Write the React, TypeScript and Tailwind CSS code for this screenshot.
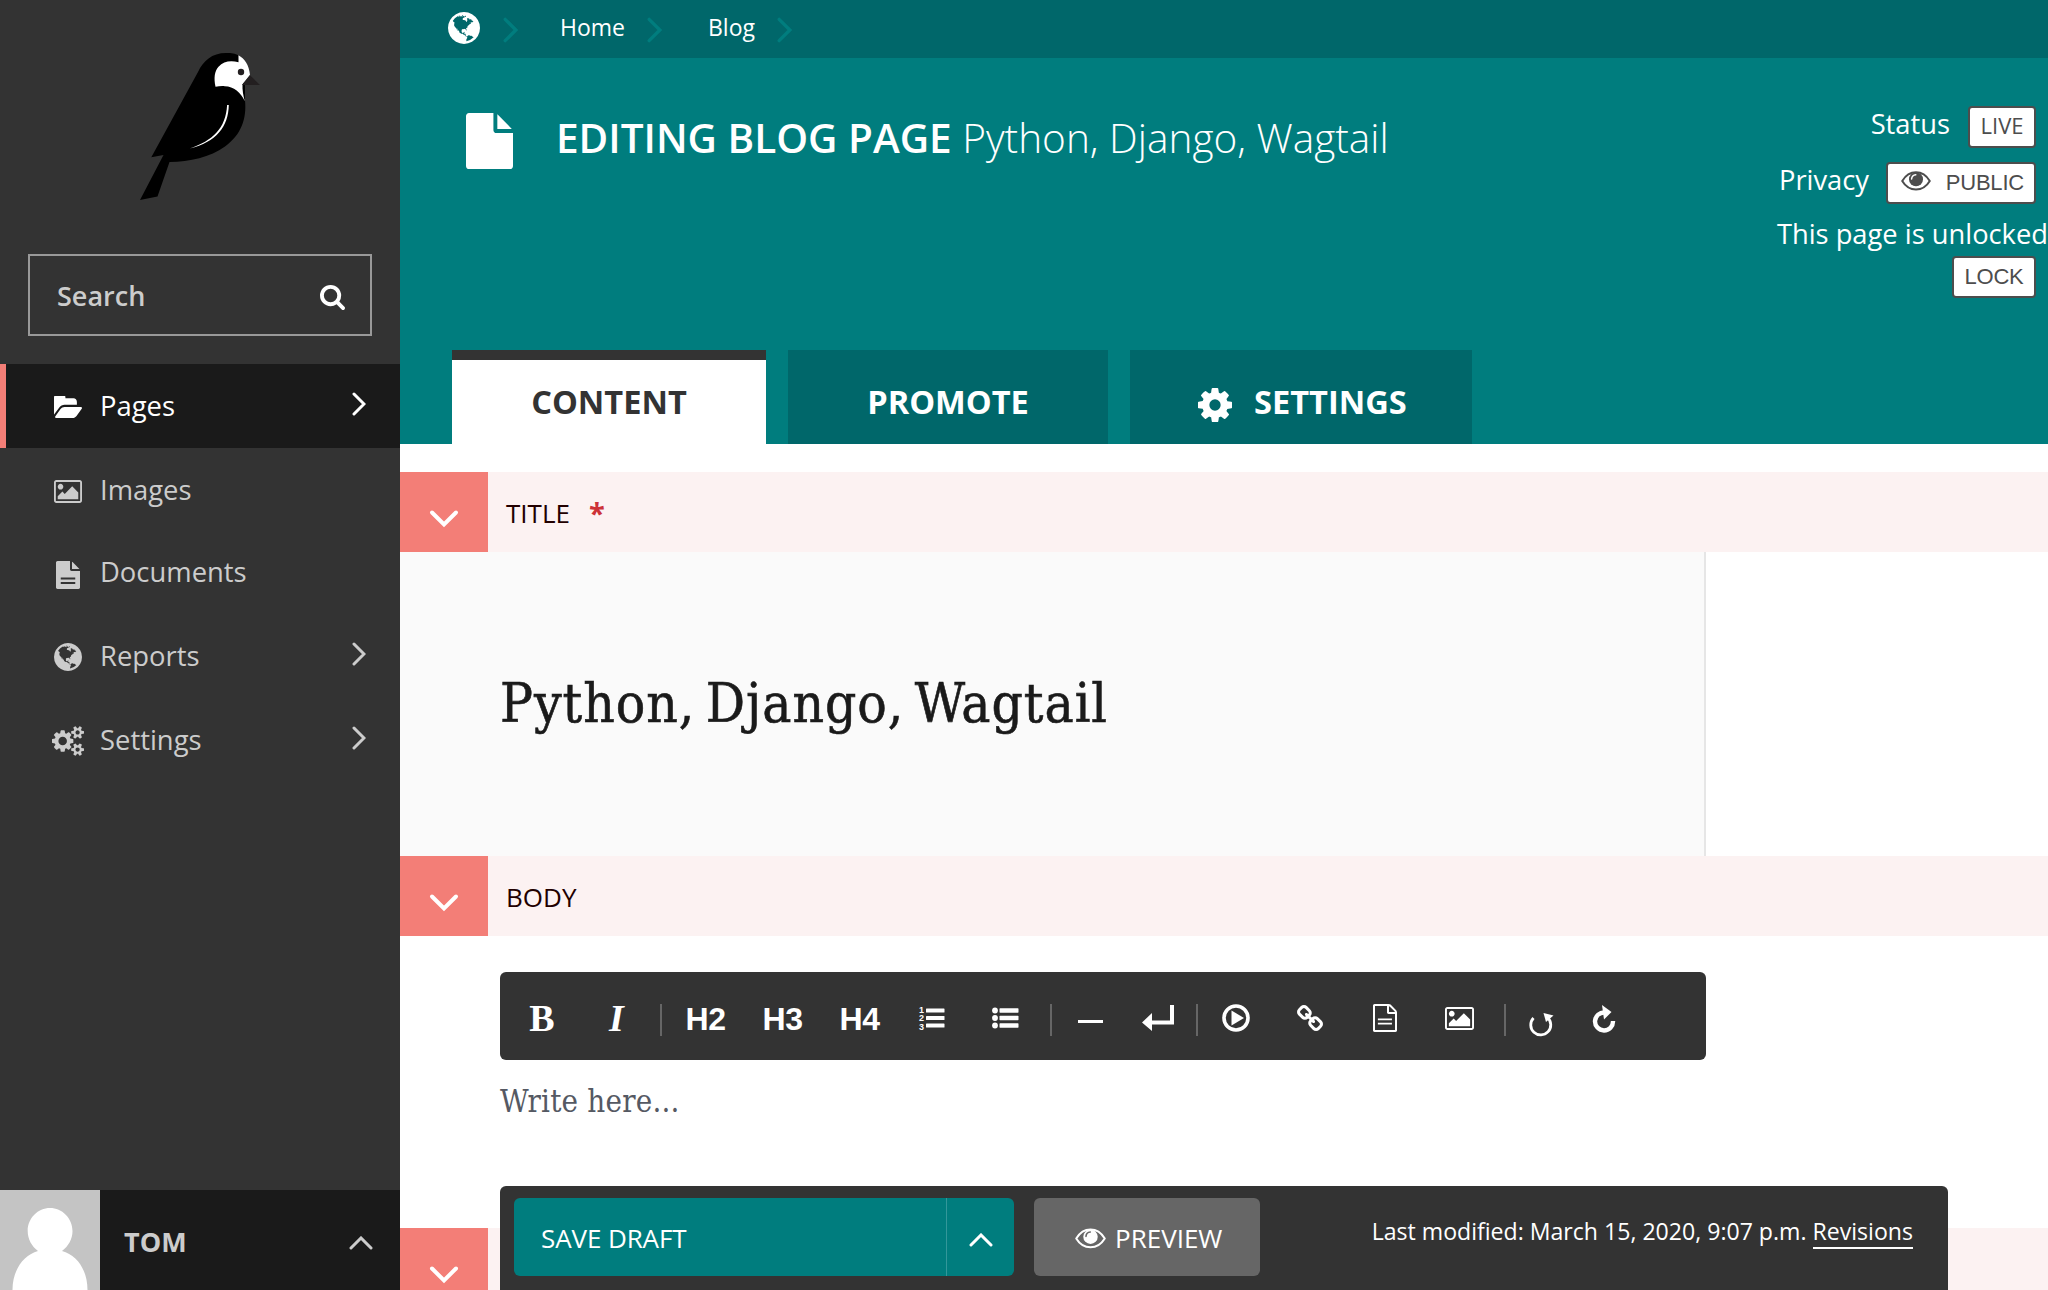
import type { ReactNode } from "react";

const P = {
  search:
    "M1216 832q0-185-131.5-316.5t-316.5-131.5-316.5 131.5-131.5 316.5 131.5 316.5 316.5 131.5 316.5-131.5 131.5-316.5zm512 832q0 52-38 90t-90 38q-54 0-90-38l-343-342q-179 124-399 124-143 0-273.5-55.5t-225-150-150-225-55.5-273.5 55.5-273.5 150-225 225-150 273.5-55.5 273.5 55.5 225 150 150 225 55.5 273.5q0 220-124 399l343 343q37 37 37 90z",
  cog: "M1152 896q0-106-75-181t-181-75-181 75-75 181 75 181 181 75 181-75 75-181zm512-109v222q0 12-8 23t-20 13l-185 28q-19 54-39 91 35 50 107 138 10 12 10 25t-9 23q-27 37-99 108t-94 71q-12 0-26-9l-138-108q-44 23-91 38-16 136-29 186-7 28-36 28h-222q-14 0-24.5-8.5t-11.5-21.5l-28-184q-49-16-90-37l-141 107q-10 9-25 9-14 0-25-11-126-114-165-168-7-10-7-23 0-12 8-23 15-21 51-66.5t54-70.5q-27-50-41-99l-183-27q-13-2-21-12.5t-8-23.5v-222q0-12 8-23t19-13l186-28q14-46 39-92-40-57-107-138-10-12-10-24 0-10 9-23 26-36 98.5-107.5t94.5-71.5q13 0 26 10l138 107q44-23 91-38 16-136 29-186 7-28 36-28h222q14 0 24.5 8.5t11.5 21.5l28 184q49 16 90 37l142-107q9-9 24-9 13 0 25 10 129 119 165 170 7 8 7 22 0 12-8 23-15 21-51 66.5t-54 70.5q26 50 41 98l183 28q13 2 21 12.5t8 23.5z",
  cogs: "M896 896q0-106-75-181t-181-75-181 75-75 181 75 181 181 75 181-75 75-181zm768 512q0-52-38-90t-90-38-90 38-38 90q0 53 37.5 90.5t90.5 37.5 90.5-37.5 37.5-90.5zm0-1024q0-52-38-90t-90-38-90 38-38 90q0 53 37.5 90.5t90.5 37.5 90.5-37.5 37.5-90.5zm-384 421v185q0 10-7 19.5t-16 10.5l-155 24q-11 35-32 76 34 48 90 115 7 11 7 20 0 12-7 19-23 30-82.5 89.5t-78.5 59.5q-11 0-21-7l-115-90q-37 19-77 31-11 108-23 155-7 24-30 24h-186q-11 0-20-7.5t-10-17.5l-23-153q-34-10-75-31l-118 89q-7 7-20 7-11 0-21-8-144-133-144-160 0-9 7-19 10-14 41-53t47-61q-23-44-35-82l-152-24q-10-1-17-9.5t-7-19.5v-185q0-10 7-19.5t16-10.5l155-24q11-35 32-76-34-48-90-115-7-11-7-20 0-12 7-20 22-30 82-89t79-59q11 0 21 7l115 90q34-18 77-32 11-108 23-154 7-24 30-24h186q11 0 20 7.5t10 17.5l23 153q34 10 75 31l118-89q8-7 20-7 11 0 21 8 144 133 144 160 0 8-7 19-12 16-42 54t-45 60q23 48 34 82l152 23q10 2 17 10.5t7 19.5zm640 533v140q0 16-149 31-12 27-30 52 51 113 51 138 0 4-4 7-122 71-124 71-8 0-46-47t-52-68q-20 2-30 2t-30-2q-14 21-52 68t-46 47q-2 0-124-71-4-3-4-7 0-25 51-138-18-25-30-52-149-15-149-31v-140q0-16 149-31 13-29 30-52-51-113-51-138 0-4 4-7 4-2 35-20t59-34 30-16q8 0 46 46.5t52 67.5q20-2 30-2t30 2q51-71 92-112l6-2q4 0 124 70 4 3 4 7 0 25-51 138 17 23 30 52 149 15 149 31zm0-1024v140q0 16-149 31-12 27-30 52 51 113 51 138 0 4-4 7-122 71-124 71-8 0-46-47t-52-68q-20 2-30 2t-30-2q-14 21-52 68t-46 47q-2 0-124-71-4-3-4-7 0-25 51-138-18-25-30-52-149-15-149-31v-140q0-16 149-31 13-29 30-52-51-113-51-138 0-4 4-7 4-2 35-20t59-34 30-16q8 0 46 46.5t52 67.5q20-2 30-2t30 2q51-71 92-112l6-2q4 0 124 70 4 3 4 7 0 25-51 138 17 23 30 52 149 15 149 31z",
  file: "M1152 512v-472q22 14 36 28l408 408q14 14 28 36h-472zm-128 32q0 40 28 68t68 28h544v1056q0 40-28 68t-68 28h-1344q-40 0-68-28t-28-68v-1600q0-40 28-68t68-28h800v544z",
  fileText:
    "M1596 476q14 14 28 36h-472v-472q22 14 36 28zm-476 164h544v1056q0 40-28 68t-68 28h-1344q-40 0-68-28t-28-68v-1600q0-40 28-68t68-28h800v544q0 40 28 68t68 28zm240 832v-130h-928v130zm0-290v-130h-928v130z",
  fileTextO:
    "M1596 380q28 28 48 76t20 88v1152q0 40-28 68t-68 28h-1344q-40 0-68-28t-28-68v-1600q0-40 28-68t68-28h896q40 0 88 20t76 48zm-444-244v376h376q-10-29-22-41l-313-313q-12-12-41-22zm384 1528v-1024h-416q-40 0-68-28t-28-68v-416h-768v1536zM440 920h900v120h-900zM440 1192h900v120h-900z",
  folder:
    "M1879 952q0 31-31 66l-336 396q-43 51-120.5 86.5t-143.5 35.5h-1088q-34 0-60.5-13t-26.5-43q0-31 31-66l336-396q43-51 120.5-86.5t143.5-35.5h1088q34 0 60.5 13t26.5 43zm-343-344v160h-832q-94 0-197 47.5t-164 119.5l-337 396-5 6q0-4-.5-12.5t-.5-12.5v-960q0-92 66-158t158-66h320q92 0 158 66t66 158v32h544q92 0 158 66t66 158z",
  picture:
    "M576 576q0 80-56 136t-136 56-136-56-56-136 56-136 136-56 136 56 56 136zm1024 384v448h-1408v-192l320-320 160 160 512-512zm96-704h-1600q-13 0-22.5 9.5t-9.5 22.5v1216q0 13 9.5 22.5t22.5 9.5h1600q13 0 22.5-9.5t9.5-22.5v-1216q0-13-9.5-22.5t-22.5-9.5zm160 32v1216q0 66-47 113t-113 47h-1600q-66 0-113-47t-47-113v-1216q0-66 47-113t113-47h1600q66 0 113 47t47 113z",
  link: "M1520 1216q0-40-28-68l-208-208q-28-28-68-28-42 0-72 32 3 3 19 18.5t21.5 21.5 15 19 13 25.5 3.5 27.5q0 40-28 68t-68 28q-15 0-27.5-3.5t-25.5-13-19-15-21.5-21.5-18.5-19q-33 31-33 73 0 40 28 68l206 207q27 27 68 27 40 0 68-26l147-146q28-28 28-67zm-703-705q0-40-28-68l-206-207q-28-28-68-28-39 0-68 27l-147 146q-28 28-28 67 0 40 28 68l208 208q27 27 68 27 42 0 72-31-3-3-19-18.5t-21.5-21.5-15-19-13-25.5-3.5-27.5q0-40 28-68t68-28q15 0 27.5 3.5t25.5 13 19 15 21.5 21.5 18.5 19q33-31 33-73zm895 705q0 120-85 203l-147 146q-83 83-203 83-121 0-204-85l-206-207q-83-83-83-203 0-123 88-209l-88-88q-86 88-208 88-120 0-204-84l-208-208q-84-84-84-204t85-203l147-146q83-83 203-83 121 0 204 85l206 207q83 83 83 203 0 123-88 209l88 88q86-88 208-88 120 0 204 84l208 208q84 84 84 204z",
  globe:
    "M896 128q209 0 385.5 103t279.5 279.5 103 385.5-103 385.5-279.5 279.5-385.5 103-385.5-103-279.5-279.5-103-385.5 103-385.5 279.5-279.5 385.5-103zm274 521q-2 1-9.5 9.5t-13.5 9.5q2 0 4.5-5t5-11 3.5-7q6-7 22-15 14-6 52-12 34-8 51 11-2-2 9.5-13t14.5-12q3-2 15-4.5t15-7.5l2-22q-12 1-17.5-7t-6.5-21q0 2-6 8 0-7-4.5-8t-11.5 1-9 1q-10-3-15-7.5t-8-16.5-4-15q-2-5-9.5-11t-9.5-10q-1-2-2.5-5.5t-3-6.5-4-5.5-5.5-2.5-7 5-7.5 10-4.5 5q-3-2-6-1.5t-4.5 1-4.5 3-5 3.5q-3 2-8.5 3t-8.5 2q15-5-1-11-10-4-16-3 9-4 7.5-12t-8.5-14h5q-1-4-8.5-8.5t-17.5-8.5-13-6q-8-5-34-9.5t-33-.5q-5 6-4.5 10.5t4 14 3.5 12.5q1 6-5.5 13t-6.5 12q0 7 14 15.5t10 21.5q-3 8-16 16t-16 12q-5 8-1.5 18.5t10.5 16.5q2 2 1.5 4t-3.5 4.5-5.5 4-6.5 3.5l-3 2q-11 5-20.5-6t-13.5-26q-7-25-16-30-23-8-29 1-5-13-41-26-25-9-58-4 6-1 0-15-7-15-19-12 3-6 4-17.5t1-13.5q3-13 12-23 1-1 7-8.5t9.5-13.5.5-6q35 4 50-11 5-5 11.5-17t10.5-17q9-6 14-5.5t14.5 5.5 14.5 5q14 1 15.5-11t-7.5-20q12 1 3-17-4-7-8-9-12-4-27 5-8 4 2 8-1-1-9.5 10.5t-16.5 17.5-16-5q-1-1-5.5-13.5t-9.5-13.5q-8 0-16 15 3-8-11-15t-24-8q19-12-8-27-7-4-20.5-5t-19.5 4q-5 7-5.5 11.5t5 8 10.5 5.5 11.5 4 8.5 3q14 10 8 14-2 1-8.5 3.5t-11.5 4.5-6 4q-3 4 0 14t-2 14q-5-5-9-17.5t-7-16.5q7 9-25 6l-10-1q-4 0-16 2t-20.5 1-13.5-8q-4-8 0-20 1-4 4-2-4-3-11-9.5t-10-8.5q-46 15-94 41 6 1 12-1 5-2 13-6.5t10-5.5q34-14 42-7l5-5q14 16 20 25-7-4-30-1-20 6-22 12 7 12 5 18-4-3-11.5-10t-14.5-11-15-5q-16 0-22 1-146 80-235 222 7 7 12 8 4 1 5 9t2.5 11 11.5-3q9 8 3 19 1-1 44 27 19 17 21 21 3 11-10 18-1-2-9-9t-9-4q-3 5 .5 18.5t10.5 12.5q-7 0-9.5 16t-2.5 35.5-1 23.5l2 1q-3 12 5.5 34.5t21.5 19.5q-13 3 20 43 6 8 8 9 3 2 12 7.5t15 10 10 10.5q4 5 10 22.5t14 23.5q-2 6 9.5 20t10.5 23q-1 0-2.5 1t-2.5 1q3 7 15.5 14t15.5 13q1 3 2 10t3 11 8 2q2-20-24-62-15-25-17-29-3-5-5.5-15.5t-4.5-14.5q2 0 6 1.5t8.5 3.5 7.5 4 2 3q-3 7 2 17.5t12 18.5 17 19 12 13q6 6 14 19.5t0 13.5q9 0 20 10.5t17 19.5q5 8 8 26t5 24q2 7 8.5 13.5t12.5 9.5l16 8 13 7q5 2 18.5 10.5t21.5 11.5q10 4 16 4t14.5-2.5 13.5-3.5q15-2 29 15t21 21q36 19 55 11-2 1 .5 7.5t8 15.5 9 14.5 5.5 8.5q5 6 18 15t18 15q6-4 7-9-3 8 7 20t18 10q14-3 14-32-31 15-49-18 0-1-2.5-5.5t-4-8.5-2.5-8.5 0-7.5 5-3q9 0 10-3.5t-2-12.5-4-13q-1-8-11-20t-12-15q-5 9-16 8t-16-9q0 1-1.5 5.5t-1.5 6.5q-13 0-15-1 1-3 2.5-17.5t3.5-22.5q1-4 5.5-12t7.5-14.5 4-12.5-4.5-9.5-17.5-2.5q-19 1-26 20-1 3-3 10.5t-5 11.5-9 7q-7 3-24 2t-24-5q-13-8-22.5-29t-9.5-37q0-10 2.5-26.5t3-25-5.5-24.5q3-2 9-9.5t10-10.5q2-1 4.5-1.5t4.5 0 4-1.5 3-6q-1-1-4-3-3-3-4-3 7 3 28.5-1.5t27.5 1.5q15 11 22-2 0-1-2.5-9.5t-.5-13.5q5 27 29 9 3 3 15.5 5t17.5 5q3 2 7 5.5t5.5 4.5 5-.5 8.5-6.5q10 14 12 24 11 40 19 44 7 3 11 2t4.5-9.5 0-14-1.5-12.5l-1-8v-18l-1-8q-15-3-18.5-12t1.5-18.5 15-18.5q1-1 8-3.5t15.5-6.5 12.5-8q21-19 15-35 7 0 11-9-1 0-5-3t-7.5-5-4.5-2q9-5 2-16 5-3 7.5-11t7.5-10q9 12 21 2 8-8 1-16 5-7 20.5-10.5t18.5-9.5q7 2 8-2t1-12 3-12q4-5 15-9t13-5l17-11q3-4 0-4 18 2 31-11 10-11-6-20 3-6-3-9.5t-15-5.5q3-1 11.5-.5t10.5-1.5q15-10-7-16-17-5-43 12zm-163 877q206-36 351-189-3-3-12.5-4.5t-12.5-3.5q-18-7-24-8 1-7-2.5-13t-8-9-12.5-8-11-7q-2-2-7-6t-7-5.5-7.5-4.5-8.5-2-10 1l-3 1q-3 1-5.5 2.5t-5.5 3-4 3 0 2.5q-21-17-36-22-5-1-11-5.5t-10.5-7-10-1.5-11.5 7q-5 5-6 15t-2 13q-7-5 0-17.5t2-18.5q-3-6-10.5-4.5t-12 4.5-11.5 8.5-9 6.5-8.5 5.5-8.5 7.5q-3 4-6 12t-5 11q-2-4-11.5-6.5t-9.5-5.5q2 10 4 35t5 38q7 31-12 48-27 25-29 40-4 22 12 26 0 7-8 20.5t-7 21.5q0 6 2 16z",
};

function Glyph({ d, box, className }: { d: string; box: string; className: string }) {
  return (
    <svg viewBox={box} className={className} fill="currentColor" fillRule="evenodd" preserveAspectRatio="none">
      <path d={d} />
    </svg>
  );
}

function ChevronRight({ className }: { className: string }) {
  return (
    <svg viewBox="0 0 14 24" className={className} fill="none" stroke="currentColor" strokeWidth="3" strokeLinecap="round">
      <path d="M2 2l10 10L2 22" />
    </svg>
  );
}

function ChevronDown({ className }: { className: string }) {
  return (
    <svg viewBox="0 0 30 20" className={className} fill="none" stroke="currentColor" strokeWidth="4" strokeLinecap="round">
      <path d="M3 3.5l12 12 12-12" />
    </svg>
  );
}

function ChevronUp({ className }: { className: string }) {
  return (
    <svg viewBox="0 0 24 14" className={className} fill="none" stroke="currentColor" strokeWidth="3" strokeLinecap="round">
      <path d="M2 12L12 2l10 10" />
    </svg>
  );
}

function Eye({ className, hole }: { className: string; hole: string }) {
  return (
    <svg viewBox="0 0 30 20" className={className} fill="none">
      <path d="M1.2 10C4.6 4.4 9.3 1.3 15 1.3S25.4 4.4 28.8 10C25.4 15.6 20.7 18.5 15 18.5S4.6 15.6 1.2 10z" stroke="currentColor" strokeWidth="2" strokeLinejoin="round" />
      <circle cx="15" cy="8.3" r="7" fill="currentColor" />
      <path d="M10.6 8a4.6 4.6 0 0 1 4.2-4.2" stroke={hole} strokeWidth="1.5" strokeLinecap="round" />
    </svg>
  );
}

function Bird() {
  return (
    <svg viewBox="140 50 122 152" className="ml-0.5 h-[152px] w-[122px]">
      <path d="M151.3 157.3L198 72c5-11 14-19 28-19 6 0 9 .6 12.5 2.2L245 86v14.5c1.8 18-3.5 34-20 46-15 11-35 15-55.5 15.5L157.5 196.5 140 200l23.5-45z" fill="#000" />
      <path d="M238.5 55.2c6 3.5 10.5 9.5 11.5 19.5l-7.5 9.5c-.3 6 .8 11 2.3 17-4-9-11-14.7-20-15-3.5-.2-6 0-9.3.5-1.8-9-1-15.5 3-20 5-5.5 12-6.5 20-4.5z" fill="#fff" />
      <circle cx="241" cy="72" r="3.2" fill="#231f20" />
      <path d="M250 75.3l10 9.7h-18z" fill="#231f20" />
      <path d="M228.8 105c-.5 22-12.5 37-39 43.5 23-8 36-20 37.3-43.5z" fill="#fff" />
    </svg>
  );
}

function MenuRow({ icon, label, arrow, className }: { icon: ReactNode; label: string; arrow?: boolean; className: string }) {
  return (
    <li className={`flex items-start ${className}`}>
      <span className="mt-[27px] flex h-7 w-[33px] items-center justify-center">{icon}</span>
      <span className="mt-[23px] ml-4 flex-1 text-[27.4px] leading-[38px]">{label}</span>
      {arrow && <ChevronRight className="mt-[28px] mr-[34px] h-6 w-3.5" />}
    </li>
  );
}

function SectionBar({ label, required }: { label: string; required?: boolean }) {
  return (
    <div className="flex h-20 shrink-0 bg-[#fcf2f2]">
      <div className="flex w-22 justify-center bg-[#f37e77] text-white">
        <ChevronDown className="mt-[37px] h-5 w-[30px]" />
      </div>
      <div className="flex pt-[23px] pl-[18px] text-[26px] leading-9 text-[#200]">
        {label}
        {required && <span className="ml-[19px] text-[29px] leading-9 font-bold text-[#cd3238]">*</span>}
      </div>
    </div>
  );
}

function Tool({ className, children }: { className: string; children: ReactNode }) {
  return <button className={`flex h-full shrink-0 items-center justify-center ${className}`}>{children}</button>;
}

function Sep({ className }: { className: string }) {
  return (
    <span className={`flex shrink-0 justify-center pt-1 ${className}`}>
      <span className="h-8 w-0.5 bg-[#666]" />
    </span>
  );
}

function Sidebar() {
  return (
    <aside className="flex w-[400px] shrink-0 flex-col bg-[#333] text-[#ccc]">
      <div className="flex h-[254px] justify-center pt-[50px]">
        <Bird />
      </div>
      <div className="mx-7 flex h-[82px] items-center justify-between border-2 border-[#999] pr-[25px] pl-[27px]">
        <span className="mt-0.5 text-[27px] leading-9 font-semibold">Search</span>
        <Glyph d={P.search} box="64 128 1664 1664" className="mt-1 size-[25px] text-white" />
      </div>
      <ul className="mt-7 flex-1">
        <MenuRow className="h-21 border-l-6 border-[#f37e77] bg-[#1a1a1a] pl-[45px] text-white" label="Pages" arrow icon={<Glyph d={P.folder} box="0 256 1879 1280" className="mt-1 h-[22px] w-7" />} />
        <MenuRow className="h-[82px] pl-[51px]" label="Images" icon={<Glyph d={P.picture} box="-64 128 1920 1536" className="mt-1 h-[23px] w-7" />} />
        <MenuRow className="h-21 pl-[51px]" label="Documents" icon={<Glyph d={P.fileText} box="128 0 1536 1792" className="mt-2 h-7 w-6" />} />
        <MenuRow className="h-21 pl-[51px]" label="Reports" arrow icon={<Glyph d={P.globe} box="128 128 1536 1536" className="mt-1 size-7" />} />
        <MenuRow className="h-21 pl-[51px]" label="Settings" arrow icon={<Glyph d={P.cogs} box="0 0 1920 1792" className="mt-1 h-[30px] w-8" />} />
      </ul>
      <div className="flex h-[100px] bg-[#1a1a1a]">
        <svg viewBox="0 0 100 100" className="size-[100px] bg-[#c4c4c4]">
          <path d="M50 18c12 0 22.5 10 22.5 23 0 8-4 15-10.5 20 15 4 25.5 19 25.5 39h-75c0-20 11-35 25.5-39-6.5-5-10.3-12-10.3-20C27.7 28 38 18 50 18z" fill="#fff" />
        </svg>
        <span className="mt-[34px] ml-6 flex-1 text-[27px] leading-9 font-bold">TOM</span>
        <ChevronUp className="mt-[46px] mr-[27px] h-3.5 w-6" />
      </div>
    </aside>
  );
}

function Header() {
  return (
    <header className="flex h-[444px] shrink-0 flex-col bg-[#007d7e] text-white">
      <nav className="flex h-[58px] shrink-0 bg-[#00676a] pl-12 text-[23px] leading-8">
        <Glyph d={P.globe} box="128 128 1536 1536" className="mt-3 size-8" />
        <ChevronRight className="mt-[17px] ml-[23px] h-[26px] w-[15px] text-[#007d7e]" />
        <span className="mt-[11px] ml-[42px]">Home</span>
        <ChevronRight className="mt-[17px] ml-[22px] h-[26px] w-[15px] text-[#007d7e]" />
        <span className="mt-[11px] ml-[46px]">Blog</span>
        <ChevronRight className="mt-[17px] ml-[22px] h-[26px] w-[15px] text-[#007d7e]" />
      </nav>
      <div className="flex flex-1 items-start">
        <Glyph d={P.file} box="128 0 1536 1792" className="mt-[55px] ml-[66px] h-14 w-[47px]" />
        <h1 className="mt-[52px] ml-[43px] flex-1 text-[40.6px] leading-[56px] font-light whitespace-nowrap">
          <span className="text-[40.5px] font-semibold">EDITING BLOG PAGE</span> Python, Django, Wagtail
        </h1>
        <div className="mt-12 flex w-72 flex-col items-end text-[27.3px] leading-[36px]">
          <div className="flex pr-3">
            Status
            <span className="ml-[18px] flex h-[42px] w-[68px] items-center justify-center rounded border-2 border-[#4d4d4d] bg-white text-[22px] leading-7 text-[#4d4d4d]">
              <span className="-mt-1">LIVE</span>
            </span>
          </div>
          <div className="mt-3.5 flex pr-3">
            Privacy
            <span className="ml-[17px] flex h-[42px] w-[150px] items-center justify-between rounded border-2 border-[#4d4d4d] bg-white pr-2.5 pl-[13px] font-[Liberation_Sans] text-[22px] leading-7 text-[#4d4d4d]">
              <Eye className="mb-1 h-5 w-[30px]" hole="#fff" />
              <span className="tracking-[-0.2px]">PUBLIC</span>
            </span>
          </div>
          <div className="mt-3 whitespace-nowrap">This page is unlocked</div>
          <span className="mt-1 mr-3 flex h-[42px] w-[84px] items-center justify-center rounded border-2 border-[#4d4d4d] bg-white font-[Liberation_Sans] text-[22px] leading-7 tracking-[-0.2px] text-[#4d4d4d]">LOCK</span>
        </div>
      </div>
      <div className="flex h-[94px] gap-[22px] pl-[52px] text-[32.6px] leading-[46px] font-bold">
        <div className="w-[314px] border-t-10 border-[#333] bg-white pt-[19px] text-center text-[#333]">CONTENT</div>
        <div className="w-80 bg-[#00676a] pt-[29px] text-center">PROMOTE</div>
        <div className="flex w-[342px] bg-[#00676a] pt-[29px] pl-[68px]">
          <Glyph d={P.cog} box="128 128 1536 1536" className="mt-[9px] mr-[22px] size-[34px]" />
          SETTINGS
        </div>
      </div>
    </header>
  );
}

function Toolbar() {
  return (
    <div className="ml-[100px] flex h-[88px] w-[1206px] shrink-0 items-center rounded-md bg-[#333] pt-1 pl-1 text-white">
      <Tool className="w-[75px] pl-px font-[Liberation_Serif] text-[38px] font-bold">B</Tool>
      <Tool className="w-[75px] font-[Liberation_Serif] text-[38px] font-bold italic">I</Tool>
      <Sep className="w-[13px]" />
      <Tool className="w-[77px] pt-px font-[Liberation_Sans] text-[32px] font-bold tracking-[-0.4px]">H2</Tool>
      <Tool className="w-[77px] pt-px font-[Liberation_Sans] text-[32px] font-bold tracking-[-0.4px]">H3</Tool>
      <Tool className="w-[77px] pt-px font-[Liberation_Sans] text-[32px] font-bold tracking-[-0.4px]">H4</Tool>
      <Tool className="w-[68px]">
        <svg viewBox="0 0 26 26" className="size-[26px] overflow-visible" fill="currentColor">
          <text x="0" y="7.5" fontSize="9" fontWeight="700" fontFamily="Liberation Sans">1</text>
          <text x="0" y="16.3" fontSize="9" fontWeight="700" fontFamily="Liberation Sans">2</text>
          <text x="0" y="25" fontSize="9" fontWeight="700" fontFamily="Liberation Sans">3</text>
          <rect x="7" y="3.5" width="18.5" height="4" rx=".6" />
          <rect x="7" y="11" width="18.5" height="4" rx=".6" />
          <rect x="7" y="18.5" width="18.5" height="4" rx=".6" />
        </svg>
      </Tool>
      <Tool className="w-[78px] pl-px">
        <svg viewBox="0 0 27 24" className="h-6 w-[27px]" fill="currentColor">
          {[4.5, 12, 19.5].map((y) => (
            <g key={y}>
              <circle cx="3" cy={y} r="2.9" />
              <rect x="7.5" y={y - 2.2} width="19" height="4.4" rx=".6" />
            </g>
          ))}
        </svg>
      </Tool>
      <Sep className="w-[13px]" />
      <Tool className="w-[65px]">
        <span className="mt-1.5 ml-px h-[3px] w-[25px] bg-white" />
      </Tool>
      <Tool className="w-[71px]">
        <svg viewBox="0 0 32 28" className="h-7 w-8" fill="currentColor">
          <path d="M28 1h4v19.5H10v6.5L0 18.500 10 9v7.500h18z" />
        </svg>
      </Tool>
      <Sep className="w-[7px]" />
      <Tool className="w-[72px]">
        <svg viewBox="0 0 28 28" className="size-7">
          <circle cx="14" cy="14" r="12" fill="none" stroke="currentColor" strokeWidth="3.6" />
          <path d="M9.5 6.5L22 14 9.5 21.5z" fill="currentColor" />
        </svg>
      </Tool>
      <Tool className="w-19">
        <Glyph d={P.link} box="80 16 1632 1632" className="size-[26px]" />
      </Tool>
      <Tool className="w-[74px]">
        <Glyph d={P.fileTextO} box="128 0 1536 1792" className="h-7 w-6" />
      </Tool>
      <Tool className="w-[74px]">
        <Glyph d={P.picture} box="-64 128 1920 1536" className="h-[23px] w-[29px]" />
      </Tool>
      <Sep className="w-[17px]" />
      <Tool className="w-[55px]">
        <svg viewBox="0 0 24 24" className="mt-3.5 size-6 overflow-visible">
          <path d="M4.5 5A10 10 0 1 0 18.5 4.5" fill="none" stroke="currentColor" strokeWidth="2.8" />
          <path d="M14.500 0l10 2.500-7.500 6.500z" fill="currentColor" />
        </svg>
      </Tool>
      <Tool className="w-[70px] pl-px">
        <svg viewBox="0 0 24 28" className="mt-0.5 h-7 w-6">
          <path d="M13 7.5A9 9 0 1 0 21 16" fill="none" stroke="currentColor" strokeWidth="4.4" />
          <path d="M10 0l9.500 7-7.500 7.500z" fill="currentColor" />
        </svg>
      </Tool>
    </div>
  );
}

function ActionBar() {
  return (
    <footer className="absolute bottom-0 left-[100px] flex h-[104px] w-[1448px] items-start rounded-t-md bg-[#333] pt-3 pl-3.5 text-white">
      <div className="flex h-[78px] w-[500px] rounded-md bg-[#007d7e] text-[26px] leading-9">
        <span className="w-[433px] border-r border-[#33979a] pt-[22px] pl-[27px] tracking-[-0.1px]">SAVE DRAFT</span>
        <span className="flex flex-1 justify-center pt-[35px]">
          <ChevronUp className="h-3.5 w-6" />
        </span>
      </div>
      <div className="ml-5 flex h-[78px] w-[226px] rounded-md bg-[#666] pt-[22px] pl-[41px] text-[26px] leading-9">
        <Eye className="mt-2 mr-[9px] h-[21px] w-[31px]" hole="#666" />
        PREVIEW
      </div>
      <p className="mt-[18px] ml-auto pr-[35px] text-[23.1px] leading-[30px] whitespace-nowrap">
        Last modified: March 15, 2020, 9:07 p.m. <span className="inline-block h-[33px] border-b-2 border-white">Revisions</span>
      </p>
    </footer>
  );
}

export default function App() {
  return (
    <div className="flex h-[1290px] w-[2048px] overflow-hidden bg-white font-['Open_Sans',sans-serif]">
      <Sidebar />
      <main className="relative flex min-w-0 flex-1 flex-col overflow-hidden">
        <Header />
        <div className="h-7 shrink-0" />
        <SectionBar label="TITLE" required />
        <div className="h-[304px] w-[1306px] shrink-0 border-r-2 border-[#e6e6e6] bg-[#fafafa] pt-[114px] pl-[100px] font-['Roboto_Slab','DejaVu_Serif_Condensed','DejaVu_Serif',serif] text-[54.5px] leading-[74px] tracking-[0.95px] [word-spacing:-6px] whitespace-nowrap text-[#1a1a1a] [-webkit-text-stroke:0.6px_#1a1a1a]">
          Python, Django, Wagtail
        </div>
        <SectionBar label="BODY" />
        <div className="h-9 shrink-0" />
        <Toolbar />
        <div className="h-[168px] shrink-0 pt-5 pl-[100px] font-['Roboto_Slab','DejaVu_Serif_Condensed','DejaVu_Serif',serif] text-[31px] leading-[42px] tracking-[0.2px] text-[#555963]">Write here...</div>
        <SectionBar label="" />
        <ActionBar />
      </main>
    </div>
  );
}
